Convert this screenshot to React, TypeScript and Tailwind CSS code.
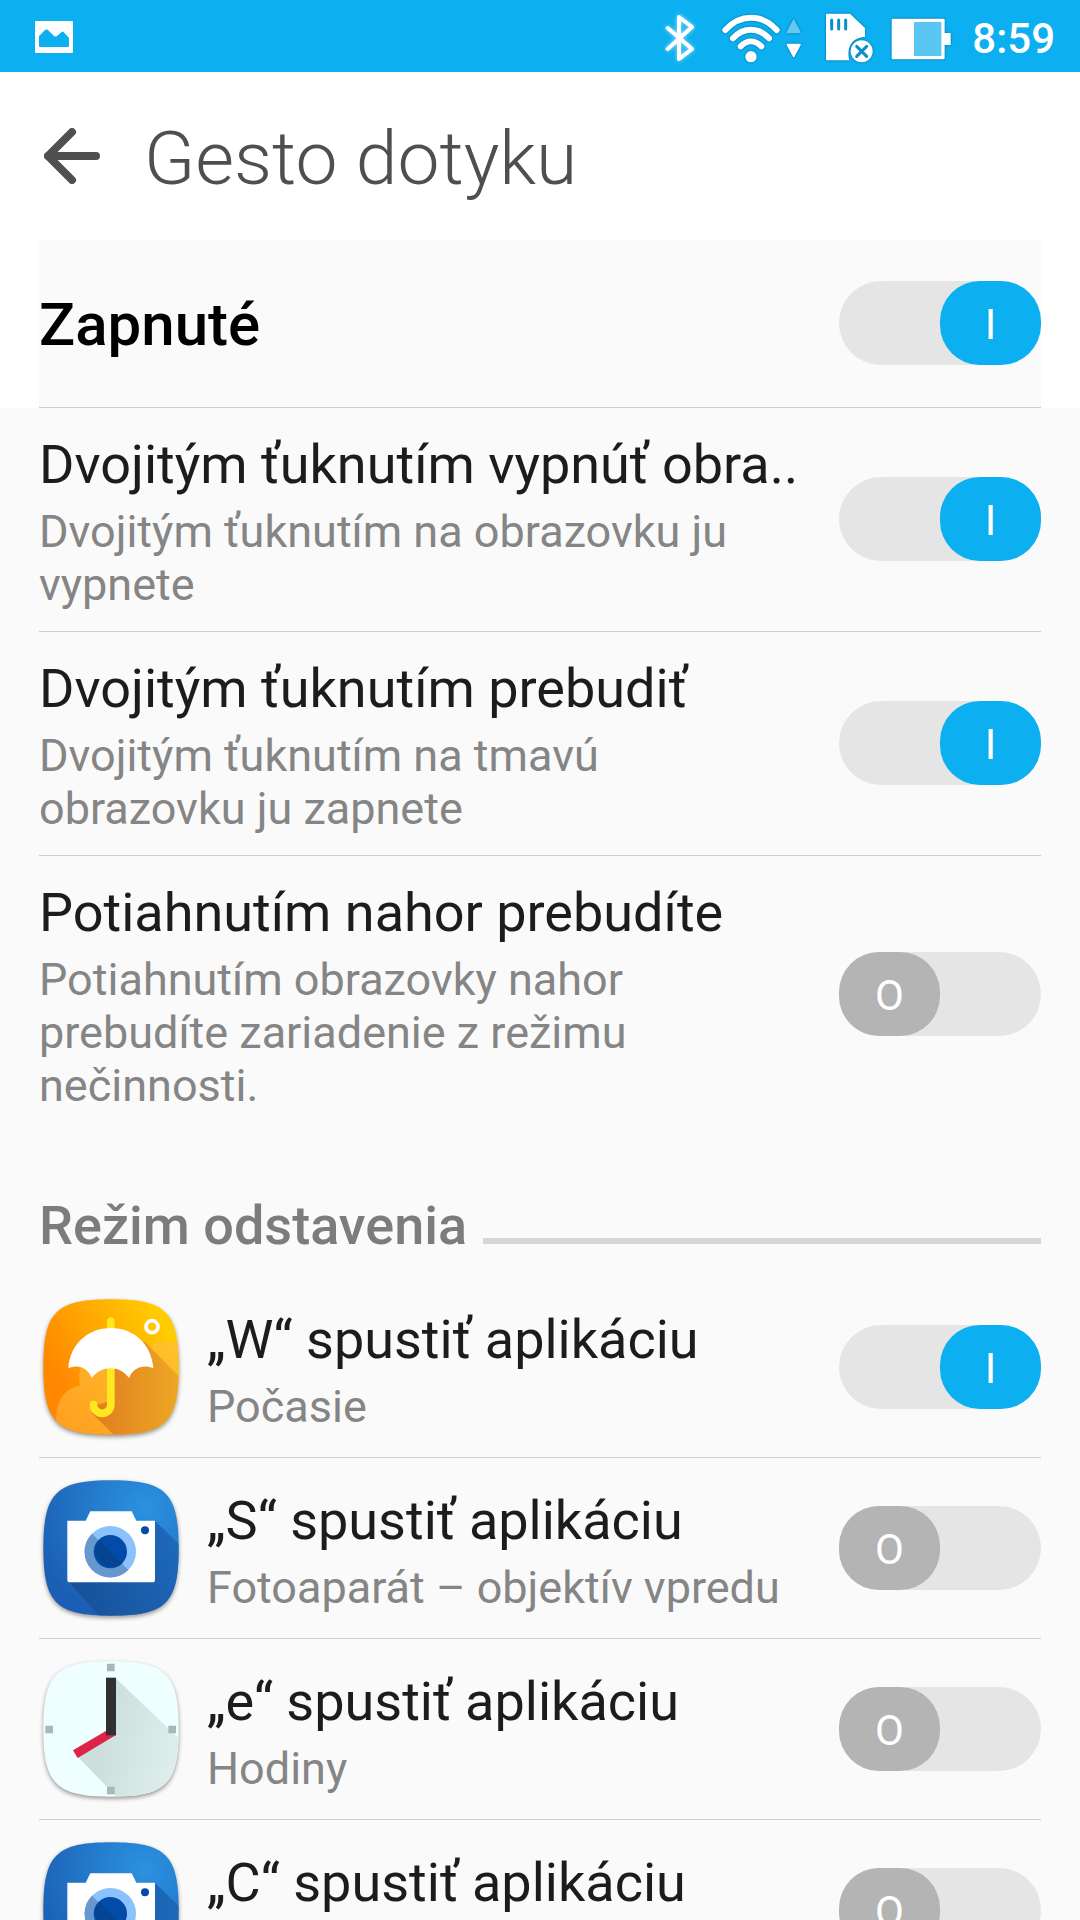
import { useState } from "react";
import type { ComponentType } from "react";
import { clsx } from "clsx";

type Setting = { id: string; title: string; summary: string; on: boolean };
type AppSetting = Setting & { icon: ComponentType };

const gestures: Setting[] = [
    { id: "double-tap-off", title: "Dvojitým ťuknutím vypnúť obra..", summary: "Dvojitým ťuknutím na obrazovku ju vypnete", on: true },
    { id: "double-tap-wake", title: "Dvojitým ťuknutím prebudiť", summary: "Dvojitým ťuknutím na tmavú obrazovku ju zapnete", on: true },
    { id: "swipe-wake", title: "Potiahnutím nahor prebudíte", summary: "Potiahnutím obrazovky nahor prebudíte zariadenie z režimu nečinnosti.", on: false },
];

const apps: AppSetting[] = [
    { id: "app-w", title: "„W“ spustiť aplikáciu", summary: "Počasie", on: true, icon: WeatherIcon },
    { id: "app-s", title: "„S“ spustiť aplikáciu", summary: "Fotoaparát – objektív vpredu", on: false, icon: CameraIcon },
    { id: "app-e", title: "„e“ spustiť aplikáciu", summary: "Hodiny", on: false, icon: ClockIcon },
    { id: "app-c", title: "„C“ spustiť aplikáciu", summary: "Fotoaparát", on: false, icon: CameraIcon },
];

const TILE = "M70 260C70 95 108 57 273 57S476 95 476 260S438 463 273 463S70 425 70 260Z";
const ICON_CLASS = "w-36 h-36 flex-none overflow-visible drop-shadow-[0_2px_2px_rgba(0,0,0,0.4)]";

function WeatherIcon() {
    return (
        <svg viewBox="57 44 432 432" className={ICON_CLASS} aria-hidden="true">
            <defs>
                <linearGradient id="sky" x1="0" y1="0.6" x2="0.85" y2="0.1">
                    <stop offset="0.1" stopColor="#ff8800" />
                    <stop offset="1" stopColor="#ffcc00" />
                </linearGradient>
                <linearGradient id="cloud" x1="0" y1="1" x2="1" y2="0">
                    <stop offset="0" stopColor="#ff9d20" />
                    <stop offset="1" stopColor="#ffc32c" />
                </linearGradient>
                <linearGradient id="umbrella-shade" x1="0" y1="0.5" x2="1" y2="0.5">
                    <stop offset="0" stopColor="#e07c20" />
                    <stop offset="1" stopColor="#eda823" />
                </linearGradient>
                <clipPath id="weather-tile"><path d={TILE} /></clipPath>
            </defs>
            <path d={TILE} fill="url(#sky)" />
            <g clipPath="url(#weather-tile)">
                <path d="M108 470V410C110 360 135 325 180 315C170 255 195 215 250 205L385 198C410 183 445 178 480 192V470Z" fill="url(#cloud)" />
                <path d="M375 184L480 292V470H288L215 398L225 375L262 365V264L300 200Z" fill="url(#umbrella-shade)" />
            </g>
            <path d="M261 145V122a11 11 0 0 1 23 0V145Z" fill="#ffe820" />
            <path d="M272.500 255V373a26 26 0 0 1-52 0" fill="none" stroke="#ffe820" strokeWidth="23" strokeLinecap="round" />
            <path d="M145 264C150 190 205 143 273 143S394 190 400 264C370 250 337 264 327 293C300 254 244 254 215 293C205 264 175 250 145 264Z" fill="#fff" />
            <circle cx="396" cy="139" r="18" fill="none" stroke="#fff" strokeWidth="11" />
        </svg>
    );
}

function CameraIcon() {
    return (
        <svg viewBox="57 44 432 432" className={ICON_CLASS} aria-hidden="true">
            <defs>
                <radialGradient id="camera-bg" cx="0.75" cy="0.2" r="0.85">
                    <stop offset="0" stopColor="#2b92e0" />
                    <stop offset="1" stopColor="#1b5fb4" />
                </radialGradient>
                <linearGradient id="camera-shade" x1="0" y1="0.8" x2="1" y2="0.4">
                    <stop offset="0" stopColor="#174f98" />
                    <stop offset="1" stopColor="#1d68b8" />
                </linearGradient>
                <clipPath id="camera-tile"><path d={TILE} /></clipPath>
            </defs>
            <path d={TILE} fill="url(#camera-bg)" />
            <path d="M403 177L480 252V470H244L144 360Z" fill="url(#camera-shade)" clipPath="url(#camera-tile)" />
            <path d="M142 178H197L211 150H335L349 178H405V355Q405 363 397 363H150Q142 363 142 355Z" fill="#fff" />
            <circle cx="271" cy="271" r="77" fill="#8bc1fd" />
            <path d="M216 217A77 77 0 0 0 325 326Z" fill="#6698cf" />
            <circle cx="271" cy="271" r="50" fill="#034ba8" />
            <path d="M236 236A50 50 0 0 0 306 306Z" fill="#044490" />
            <circle cx="375" cy="207" r="12" fill="#034ba8" />
        </svg>
    );
}

function ClockIcon() {
    return (
        <svg viewBox="57 44 432 432" className={ICON_CLASS} aria-hidden="true">
            <defs>
                <linearGradient id="dial-shade" x1="0.2" y1="0.7" x2="1" y2="0.9">
                    <stop offset="0" stopColor="#cddfdd" />
                    <stop offset="1" stopColor="#e0f0ef" />
                </linearGradient>
                <clipPath id="clock-tile"><path d={TILE} /></clipPath>
            </defs>
            <path d={TILE} fill="#efffff" />
            <path d="M287 108L480 291V470H296L174 344L262 276Z" fill="url(#dial-shade)" clipPath="url(#clock-tile)" />
            <path d="M261 64h23v23h-23zM76 250h23v23h-23zM445 250h23v23h-23zM261 433h23v23h-23z" fill="#a8b8b6" />
            <path d="M259 265L159 324L173 347L288 278V265Z" fill="#dc2449" />
            <path d="M258 106h30v173h-30z" fill="#303030" />
        </svg>
    );
}

function StatusBar() {
    return (
        <div className="h-[72px] flex-none bg-[#0cafef] flex items-center pt-0.5 pl-[35px] pr-[25px] text-white">
            <svg viewBox="0 0 39 32" className="w-[39px] h-8" aria-label="Snímka obrazovky">
                <path fillRule="evenodd" fill="#fff" d="M1 0H37Q38 0 38 1V31Q38 32 37 32H1Q0 32 0 31V1Q0 0 1 0ZM4 15V25Q4 26 5 26H33Q34 26 34 25V17L28.500 11Q27.500 10 26 11.500L22 15Q20.500 16 19 15L13 9Q11.500 8 10 9Z" />
            </svg>
            <div className="ml-auto flex items-center">
                <svg viewBox="66 33 102 150" className="w-[34px] h-[50px] overflow-visible drop-shadow-[0_0_2px_rgba(255,255,255,0.6)]" aria-label="Bluetooth">
                    <path d="M80 81L153 144L114 174V48L153 78L80 144" fill="none" stroke="#fff" strokeWidth="12" strokeLinecap="round" strokeLinejoin="round" />
                </svg>
                <svg viewBox="243 33 243 150" className="ml-6 w-[81px] h-[50px] overflow-visible drop-shadow-[0_0_1px_rgba(0,70,120,0.7)]" aria-label="Wi-Fi">
                    <path d="M256 87C300 38 366 38 410 87M279 112C310 78 356 78 387 112M302 136C321 117 345 117 364 136" fill="none" stroke="#fff" strokeWidth="18" strokeLinecap="round" />
                    <circle cx="333" cy="167" r="17" fill="#fff" />
                    <path d="M461 58L480 94H442Z" fill="#63c8f2" stroke="#63c8f2" strokeWidth="5" strokeLinejoin="round" />
                    <path d="M461 166L480 131H442Z" fill="#fff" stroke="#fff" strokeWidth="5" strokeLinejoin="round" />
                </svg>
                <svg viewBox="552 33 150 150" className="ml-[22px] w-[50px] h-[50px] overflow-visible drop-shadow-[0_0_1px_rgba(0,70,120,0.7)]" aria-label="SD karta">
                    <path d="M558 42Q558 38 562 38H630L675 81V108C640 108 618 135 628 178H562Q558 178 558 174Z" fill="#fff" />
                    <path d="M575 57V84M596 57V84M617 57V84" stroke="#0b8fca" strokeWidth="9" strokeLinecap="round" />
                    <circle cx="665" cy="151" r="33" fill="#fff" />
                    <path d="M650 136L680 166M680 136L650 166" stroke="#0b8fca" strokeWidth="9" strokeLinecap="round" />
                </svg>
                <svg viewBox="747 33 186 150" className="ml-4 w-[62px] h-[50px] overflow-visible drop-shadow-[0_0_1px_rgba(0,70,120,0.7)]" aria-label="Batéria">
                    <path d="M756 53H907Q911 53 911 57V96H929V132H911V171Q911 175 907 175H756Q752 175 752 171V57Q752 53 756 53Z" fill="#fff" />
                    <path d="M819 63H901V165H819Z" fill="#59c7f2" />
                </svg>
                <time className="ml-5 pt-1 text-[42px] leading-none font-medium">8:59</time>
            </div>
        </div>
    );
}

function Toggle({ id, defaultOn }: { id: string; defaultOn: boolean }) {
    const [on, setOn] = useState(defaultOn);

    return (
        <label htmlFor={id} className="relative block w-[202px] h-[84px] flex-none rounded-full bg-[#e5e5e5] cursor-pointer">
            <input
                id={id}
                type="checkbox"
                role="switch"
                checked={on}
                onChange={() => setOn(!on)}
                aria-labelledby={`${id}-title`}
                className="peer sr-only"
            />
            <span className="flex w-1/2 h-full items-center justify-center rounded-[40px] bg-[#b4b4b4] pt-1 text-[42px] leading-none text-white peer-checked:ml-auto peer-checked:bg-[#0cafef]">
                {on ? "I" : "O"}
            </span>
        </label>
    );
}

function RowText({ id, title, summary, className }: { id: string; title: string; summary: string; className?: string }) {
    return (
        <div className={clsx("flex-1 min-w-0", className)}>
            <h3 id={`${id}-title`} className="text-[54px] leading-[64px] text-[#1c1c1c] whitespace-nowrap">{title}</h3>
            <p className="mt-2 text-[45px] leading-[53px] text-[#858585]">{summary}</p>
        </div>
    );
}

export default function App() {
    return (
        <div className="h-screen flex flex-col overflow-hidden bg-[#fafafa] font-['Roboto','Noto_Sans',sans-serif]">
            <StatusBar />
            <header className="h-[168px] flex-none flex items-center bg-white pl-11">
                <button type="button" aria-label="Späť">
                    <svg viewBox="0 0 56 56" className="w-14 h-14" fill="none" stroke="#4f4f4f" strokeWidth="8" strokeLinecap="round" strokeLinejoin="round">
                        <path d="M28 4L4 28L28 52M4 28H52" />
                    </svg>
                </button>
                <h1 className="ml-11 pt-1 text-[75px] leading-[88px] font-light text-[#4f4f4f]">Gesto dotyku</h1>
            </header>

            <main className="flex-1 min-h-0 overflow-hidden">
                <div className="bg-white px-[39px]">
                    <div className="h-[168px] flex items-center justify-between bg-[#fafafa] pb-px border-b border-[#cccccc]">
                        <h2 id="all-title" className="pt-1 text-[60px] leading-[70px] font-medium text-black">Zapnuté</h2>
                        <Toggle id="all" defaultOn />
                    </div>
                </div>

                <ul className="px-[39px]">
                    {gestures.map((item) => (
                        <li key={item.id} className="flex items-center gap-8 pb-px border-b border-[#cccccc] last:border-0">
                            <RowText id={item.id} title={item.title} summary={item.summary} className="pt-[25px] pb-[19px]" />
                            <Toggle id={item.id} defaultOn={item.on} />
                        </li>
                    ))}
                </ul>

                <div className="px-[39px] pt-[62px] pb-[19px] flex items-end gap-4">
                    <h2 className="text-[54px] leading-[64px] font-medium text-[#7c7c7c]">Režim odstavenia</h2>
                    <div className="mb-[14px] h-[6px] flex-1 bg-[#d5d6d8]" />
                </div>

                <ul className="px-[39px]">
                    {apps.map((item) => (
                        <li key={item.id} className="h-[181px] flex items-center gap-6 border-b border-[#cccccc]">
                            <item.icon />
                            <RowText id={item.id} title={item.title} summary={item.summary} className="pt-[7px]" />
                            <Toggle id={item.id} defaultOn={item.on} />
                        </li>
                    ))}
                </ul>
            </main>
        </div>
    );
}
